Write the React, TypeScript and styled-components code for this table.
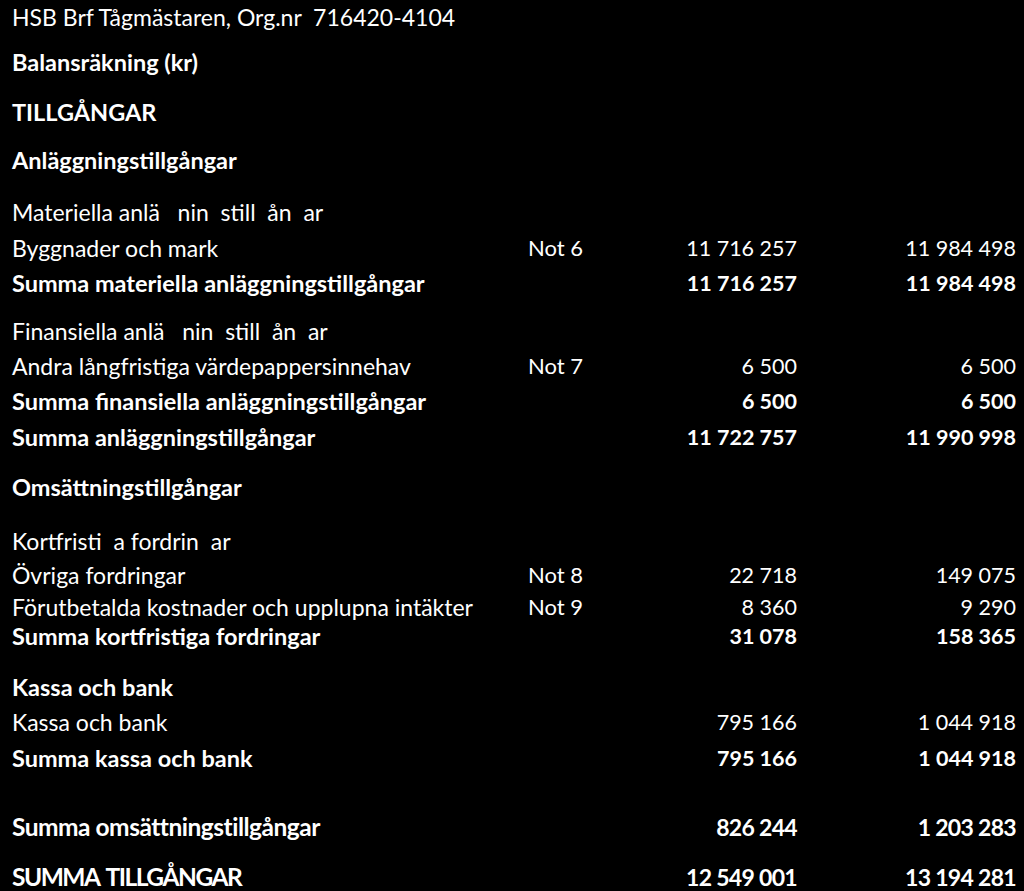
import styled, { createGlobalStyle } from "styled-components"

const Global = createGlobalStyle`
    html, body {
        margin: 0;
        padding: 0;
        background: #000;
    }
`

const Page = styled.div`
    width: 1024px;
    height: 891px;
    overflow: hidden;
    background: #000;
    color: #fff;
    font-family: 'Lato', 'Open Sans', sans-serif;
    padding: 2px 8px 0 12px;
    box-sizing: border-box;
`

const Row = styled.div<{ space?: number, bold?: boolean }>`
    display: grid;
    grid-template-columns: 516px 92px 177px 219px;
    align-items: center;
    height: 30px;
    line-height: 28px;
    margin-top: ${({ space }) => (space || 0) + "px"};
    font-weight: ${({ bold }) => bold ? 700 : 400};
    white-space: nowrap;
`

const Label = styled.div<{ bold?: boolean, big?: boolean, track?: number }>`
    font-size: ${({ bold, big }) => big ? "24.5px" : bold ? "23.5px" : "23px"};
    letter-spacing: ${({ track }) => (track || 0) + "em"};
    word-spacing: ${({ track }) => track && track < -0.03 ? "0.12em" : "0"};
`

const Note = styled.div`
    font-size: 22px;
    font-weight: 400;
`

const Amount = styled.div<{ big?: boolean }>`
    text-align: right;
    font-size: ${({ big }) => big ? "23px" : "21.5px"};
    letter-spacing: ${({ big }) => big ? "-0.03em" : "0"};
`

interface Line {
    label: string
    note?: string
    cur?: string
    prev?: string
    space?: number
    bold?: boolean
    big?: boolean
    track?: number
}

const lines: Line[] = [
    { label: "HSB Brf Tågmästaren, Org.nr\u00a0\u00a0716420-4104" },
    { label: "Balansräkning (kr)", bold: true, space: 15 },
    { label: "TILLGÅNGAR", bold: true, space: 20 },
    { label: "Anläggningstillgångar", bold: true, space: 18 },
    { label: "Materiella anlä\u00a0\u00a0\u00a0nin\u00a0\u00a0still\u00a0\u00a0ån\u00a0\u00a0ar", space: 22 },
    { label: "Byggnader och mark", note: "Not 6", cur: "11 716 257", prev: "11 984 498", space: 6 },
    { label: "Summa materiella anläggningstillgångar", cur: "11 716 257", prev: "11 984 498", bold: true, space: 5 },
    { label: "Finansiella anlä\u00a0\u00a0\u00a0nin\u00a0\u00a0still\u00a0\u00a0ån\u00a0\u00a0ar", space: 18 },
    { label: "Andra långfristiga värdepappersinnehav", note: "Not 7", cur: "6 500", prev: "6 500", space: 5 },
    { label: "Summa finansiella anläggningstillgångar", cur: "6 500", prev: "6 500", bold: true, space: 5 },
    { label: "Summa anläggningstillgångar", cur: "11 722 757", prev: "11 990 998", bold: true, space: 6 },
    { label: "Omsättningstillgångar", bold: true, space: 20 },
    { label: "Kortfristi\u00a0\u00a0a fordrin\u00a0\u00a0ar", space: 24 },
    { label: "Övriga fordringar", note: "Not 8", cur: "22 718", prev: "149 075", space: 4 },
    { label: "Förutbetalda kostnader och upplupna intäkter", note: "Not 9", cur: "8 360", prev: "9 290", space: 2 },
    { label: "Summa kortfristiga fordringar", cur: "31 078", prev: "158 365", bold: true, space: -1 },
    { label: "Kassa och bank", bold: true, space: 21 },
    { label: "Kassa och bank", cur: "795 166", prev: "1 044 918", space: 5 },
    { label: "Summa kassa och bank", cur: "795 166", prev: "1 044 918", bold: true, space: 6 },
    { label: "Summa omsättningstillgångar", cur: "826 244", prev: "1 203 283", bold: true, big: true, track: -0.02, space: 39 },
    { label: "SUMMA TILLGÅNGAR", cur: "12 549 001", prev: "13 194 281", bold: true, big: true, track: -0.06, space: 20 },
]

export default function App() {
    return (
        <Page>
            <Global />
            {
                lines.map((line, i) => (
                    <Row key={i} space={line.space} bold={line.bold}>
                        <Label bold={line.bold} big={line.big} track={line.track}>{line.label}</Label>
                        <Note>{line.note}</Note>
                        <Amount big={line.big}>{line.cur}</Amount>
                        <Amount big={line.big}>{line.prev}</Amount>
                    </Row>
                ))
            }
        </Page>
    )
}
